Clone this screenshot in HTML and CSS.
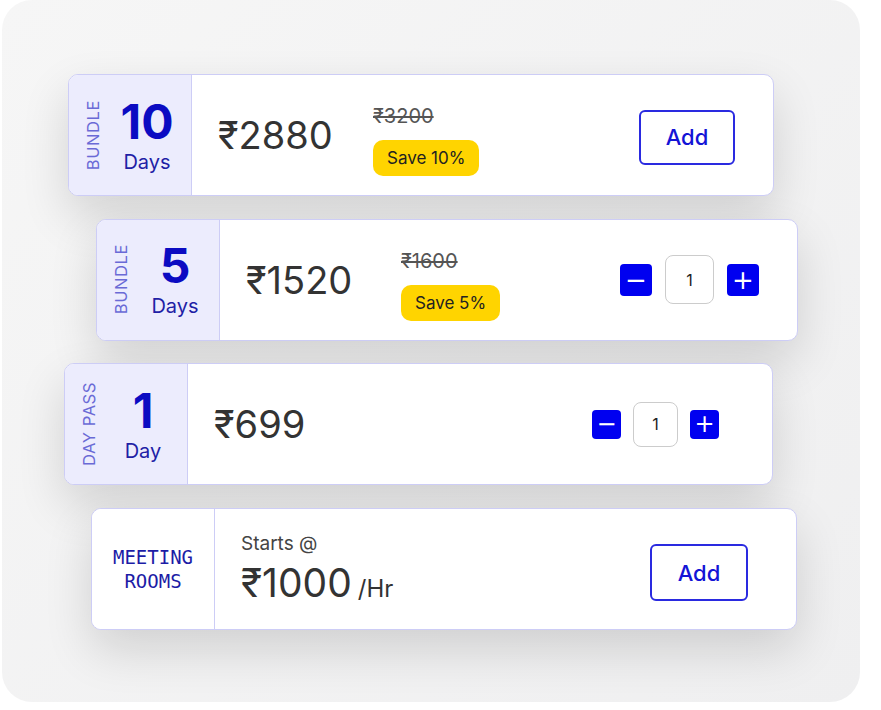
FILE: index.html
```html
<!DOCTYPE html>
<html lang="en">
  <head>
    <meta charset="UTF-8" />
    <meta name="viewport" content="width=device-width, initial-scale=1.0" />
    <title>Passes</title>
    <link rel="stylesheet" href="styles.css">
  </head>
  <body>
    <div class="panel">
      <div class="card-list">
        <div class="card card-one">
          <div class="card-tag">
            <span class="tag-label">BUNDLE</span>
            <div class="tag-count">
              <span class="count-num">10</span>
              <span class="count-unit">Days</span>
            </div>
          </div>
          <div class="card-body">
            <div class="price">₹2880</div>
            <div class="deal">
              <s class="old-price">₹3200</s>
              <span class="save">Save 10%</span>
            </div>
            <button class="add-btn">Add</button>
          </div>
        </div>

        <div class="card card-two">
          <div class="card-tag">
            <span class="tag-label">BUNDLE</span>
            <div class="tag-count">
              <span class="count-num">5</span>
              <span class="count-unit">Days</span>
            </div>
          </div>
          <div class="card-body">
            <div class="price">₹1520</div>
            <div class="deal">
              <s class="old-price">₹1600</s>
              <span class="save">Save 5%</span>
            </div>
            <div class="qty">
              <button class="qty-btn">&minus;</button>
              <input class="qty-input" type="text" value="1" />
              <button class="qty-btn">+</button>
            </div>
          </div>
        </div>

        <div class="card card-three">
          <div class="card-tag">
            <span class="tag-label">DAY PASS</span>
            <div class="tag-count">
              <span class="count-num">1</span>
              <span class="count-unit">Day</span>
            </div>
          </div>
          <div class="card-body">
            <div class="price">₹699</div>
            <div class="qty qty-small">
              <button class="qty-btn">&minus;</button>
              <input class="qty-input" type="text" value="1" />
              <button class="qty-btn">+</button>
            </div>
          </div>
        </div>

        <div class="card card-four">
          <div class="card-tag tag-plain">
            <span class="tag-rooms">MEETING<br>ROOMS</span>
          </div>
          <div class="card-body">
            <div class="rate">
              <span class="rate-from">Starts @</span>
              <span class="rate-price">₹1000<small>/Hr</small></span>
            </div>
            <button class="add-btn">Add</button>
          </div>
        </div>
      </div>
    </div>
  </body>
</html>
```

FILE: styles.css
```css
body {
  margin: 0;
  background-color: #ffffff;
  font-family: Inter, "Noto Sans", sans-serif;
}
.panel {
  margin-left: 2px;
  width: 858px;
  height: 702px;
  box-sizing: border-box;
  padding-top: 74px;
  border-radius: 30px;
  background: linear-gradient(135deg, #f6f6f6, #efeff0);
}
.card-list {
  display: flex;
  flex-direction: column;
  gap: 22.5px;
}
.card {
  display: flex;
  height: 122px;
  box-sizing: border-box;
  background-color: white;
  border: 1.5px solid #cdcdf6;
  border-radius: 10px;
  box-shadow: 0 20px 48px rgba(0, 0, 0, 0.14);
  overflow: hidden;
}
.card-one {
  margin-left: 66px;
  width: 706px;
}
.card-two {
  margin-left: 94px;
  width: 702px;
}
.card-three {
  margin-left: 62px;
  width: 709px;
}
.card-four {
  margin-left: 89px;
  width: 706px;
}
.card-tag {
  width: 123px;
  flex-shrink: 0;
  display: flex;
  align-items: center;
  background-color: #ececfd;
  border-right: 1.5px solid #cdcdf6;
  box-sizing: border-box;
  padding-left: 14px;
}
.tag-label {
  writing-mode: vertical-rl;
  transform: rotate(180deg);
  font-size: 16.5px;
  letter-spacing: 0.6px;
  color: #6a6ad6;
}
.tag-count {
  flex: 1;
  display: flex;
  flex-direction: column;
  align-items: center;
}
.count-num {
  font-size: 48px;
  font-weight: 700;
  line-height: 50px;
  color: #0b0bc2;
}
.count-unit {
  font-size: 20px;
  color: #1f1fa6;
  margin-top: 3px;
}
.tag-plain {
  background-color: white;
  justify-content: center;
  padding-left: 0;
}
.tag-rooms {
  font-family: "DejaVu Sans Mono", monospace;
  font-size: 19px;
  line-height: 24px;
  text-align: center;
  color: #1c1ca6;
}
.card-body {
  flex: 1;
  display: flex;
  align-items: center;
  padding-left: 26px;
  padding-right: 38px;
}
.price {
  width: 155px;
  font-size: 38px;
  color: #333;
}
.deal {
  display: flex;
  flex-direction: column;
  align-items: flex-start;
  gap: 12px;
  margin-top: 10px;
}
.old-price {
  font-size: 20px;
  color: #555;
}
.save {
  background-color: #ffd400;
  border-radius: 10px;
  padding: 8px 14px;
  font-size: 17px;
  color: #222;
}
.add-btn {
  margin-left: auto;
  margin-top: 4px;
  width: 96px;
  height: 55px;
  background-color: white;
  border: 2px solid #2a2ae0;
  border-radius: 6px;
  font-family: inherit;
  font-size: 22px;
  font-weight: 500;
  color: #1414d6;
}
.qty {
  margin-left: auto;
  display: flex;
  align-items: center;
  gap: 13px;
}
.qty-btn {
  width: 32px;
  height: 32px;
  padding: 0;
  border: none;
  border-radius: 4px;
  background-color: #0000f0;
  color: white;
  font-family: "DejaVu Sans", sans-serif;
  font-size: 26px;
  line-height: 32px;
}
.qty-input {
  width: 49px;
  height: 49px;
  box-sizing: border-box;
  border: 1px solid #ccc;
  border-radius: 8px;
  text-align: center;
  font-family: inherit;
  font-size: 16px;
  color: #222;
}
.qty-small {
  gap: 12px;
  margin-right: 15px;
}
.qty-small .qty-btn {
  width: 29px;
  height: 29px;
  line-height: 29px;
  font-size: 24px;
}
.qty-small .qty-input {
  width: 45px;
  height: 45px;
}
.card-four .card-body {
  padding-right: 48px;
}
.card-four .add-btn {
  width: 98px;
  height: 57px;
  margin-top: 8px;
}
.rate {
  display: flex;
  flex-direction: column;
  gap: 4px;
}
.rate-from {
  font-size: 19px;
  color: #444;
}
.rate-price {
  font-size: 39px;
  color: #333;
}
.rate-price small {
  font-size: 24px;
  margin-left: 6px;
}
```
